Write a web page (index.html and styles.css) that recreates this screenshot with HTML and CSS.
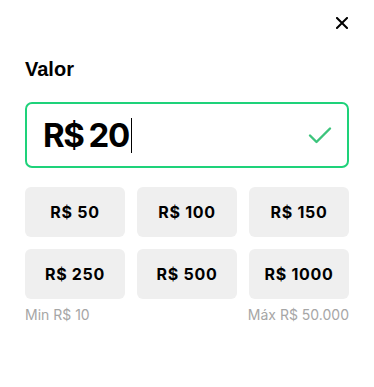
FILE: index.html
```html
<!DOCTYPE html>
<html lang="pt-BR">
<head>
<meta charset="utf-8">
<link rel="stylesheet" href="styles.css">
</head>
<body>
<div class="modal">
  <div class="top">
    <button class="close" aria-label="Fechar">
      <svg width="12" height="12" viewBox="0 0 12 12"><path d="M1 1L11 11M11 1L1 11" stroke="#000" stroke-width="2" stroke-linecap="square"/></svg>
    </button>
  </div>
  <div class="label">Valor</div>
  <div class="field">
    <span class="value">R$ 20</span><span class="caret"></span>
    <svg class="check" width="24" height="18" viewBox="0 0 24 18"><path d="M2 9.5L8.5 16L22 2.5" fill="none" stroke="#3cc47c" stroke-width="2.4" stroke-linecap="round" stroke-linejoin="round"/></svg>
  </div>
  <div class="grid">
    <button class="opt">R$ 50</button>
    <button class="opt">R$ 100</button>
    <button class="opt">R$ 150</button>
    <button class="opt">R$ 250</button>
    <button class="opt">R$ 500</button>
    <button class="opt">R$ 1000</button>
  </div>
  <div class="limits">
    <span>Min R$ 10</span>
    <span>Máx R$ 50.000</span>
  </div>
</div>
</body>
</html>
```
FILE: styles.css
```css
* { box-sizing: border-box; }
html, body { margin: 0; padding: 0; background: #fff; }
body { width: 374px; height: 387px; }
.modal { padding: 14px 25px 0 25px; }
.top { display: flex; justify-content: flex-end; height: 19px; }
.close { border: 0; background: none; padding: 0; margin: 3px 0 0 0; width: 12px; height: 12px; display: block; position: relative; left: -1px; }
.close svg { display: block; }
.label { font-family: "Liberation Sans", Arial, sans-serif; font-weight: 700; font-size: 20px; line-height: 24px; color: #000; margin-top: 24px; }
.field { margin-top: 21px; height: 66px; border: 2px solid #1ed27a; border-radius: 7px; display: flex; align-items: center; padding: 0 15px 0 16px; }
.value { font-family: Inter, sans-serif; font-weight: 700; font-size: 33px; letter-spacing: -1.5px; word-spacing: -1px; color: #000; line-height: 1; }
.caret { width: 1px; height: 35px; background: #000; margin-left: 2px; }
.check { margin-left: auto; display: block; }
.grid { margin-top: 19px; display: grid; grid-template-columns: 100px 100px 100px; column-gap: 12px; row-gap: 12px; justify-content: space-between; }
.opt { height: 50px; border: 0; border-radius: 6px; background: #efefef; font-family: Inter, sans-serif; font-weight: 700; font-size: 16px; color: #000; padding: 0; letter-spacing: 0.7px; }
.limits { display: flex; justify-content: space-between; margin-top: 7px; font-family: Inter, sans-serif; font-size: 14px; color: #a6a6a6; line-height: 18px; }
```
